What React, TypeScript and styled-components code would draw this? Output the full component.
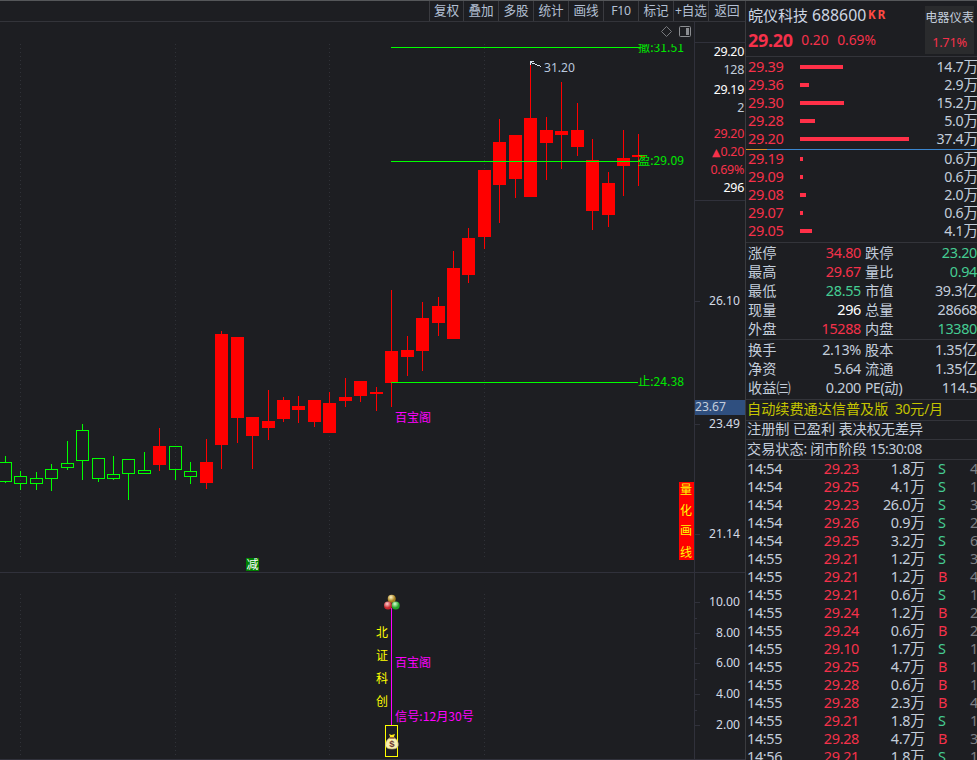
import React from "react";
import styled, { createGlobalStyle } from "styled-components";

const C = {
  bg: "#1d1e22",
  line: "#33343a",
  axis: "#30313b",
  text: "#c3cddb",
  red: "#f5314a",
  green: "#45cc92",
  white: "#ffffff",
  dim: "#7d7f84",
  up: "#ff0000",
  down: "#00ff00",
  magenta: "#ff00ff",
};

const CJK = `"Noto Sans CJK SC", "Noto Sans", sans-serif`;
const LATIN = `"Noto Sans", "Noto Sans CJK SC", sans-serif`;

const Global = createGlobalStyle`
  * { box-sizing: border-box; }
  body { margin: 0; background: ${C.bg}; overflow: hidden; font-family: ${CJK}; }
`;

/* Latin runs are set slightly smaller and tighter than the Chinese text beside them. */
const Latin = styled.span`
  font-family: ${LATIN};
  font-size: 0.975em;
  letter-spacing: -0.024em;
`;

const isLatin = (s: string) => /^[\x20-\x7e]+$/.test(s);

const T = ({ children }: { children: string }) => (
  <>
    {children
      .split(/([\x20-\x7e]+)/)
      .filter(Boolean)
      .map((p, i) => (isLatin(p) ? <Latin key={i}>{p}</Latin> : p))}
  </>
);

const Screen = styled.div`
  width: 977px;
  height: 760px;
  display: grid;
  grid-template-columns: 745px 232px;
  background: ${C.bg};
  border-top: 1px solid #55575a;
  overflow: hidden;
`;

const Left = styled.div`
  display: flex;
  flex-direction: column;
  min-width: 0;
`;

const Toolbar = styled.div`
  display: flex;
  justify-content: flex-end;
  flex: none;
  height: 21px;
  border-bottom: 1px solid ${C.line};
`;

const Tool = styled.div<{ $w?: number }>`
  width: ${(p) => p.$w ?? 35}px;
  flex: none;
  border-left: 1px solid #3a3b40;
  color: #b4c0d4;
  font-size: 12.6px;
  line-height: 18px;
  text-align: center;
  white-space: nowrap;
  overflow: hidden;
`;

const ChartArea = styled.div`
  display: grid;
  grid-template-columns: 694px 51px;
  flex: 1;
  min-height: 0;
`;

const Axis = styled.div`
  display: flex;
  flex-direction: column;
  overflow: hidden;
`;

const Quote = styled.div`
  flex: none;
  height: 178px;
  border-left: 1px solid ${C.axis};
  padding-top: 20px;
`;

const QuoteList = styled.div`
  border-top: 1px solid ${C.axis};
  height: 100%;
  padding-right: 1px;
  text-align: right;
  font-size: 12.8px;
`;

const QuoteRow = styled.div<{ $c: string; $h: number }>`
  height: ${(p) => p.$h}px;
  line-height: 16px;
  color: ${(p) => p.$c};
  white-space: nowrap;
`;

const Triangle = styled.span`
  font-family: "DejaVu Sans", sans-serif;
  font-size: 11px;
`;

const Side = styled.div`
  border-left: 1px solid #3a3b3f;
  min-width: 0;
  overflow: hidden;
  color: ${C.text};
  font-size: 15px;
  white-space: nowrap;
`;

const Header = styled.div`
  display: flex;
  justify-content: space-between;
  height: 56px;
  padding: 5px 3px 0 2px;
  border-bottom: 1px solid ${C.line};
`;

const Title = styled.div`
  display: flex;
  height: 20px;
  line-height: 18px;
  color: #cdd6e2;
  gap: 4px;
`;

const Code = styled.span`
  font-family: ${LATIN};
  font-size: 15.8px;
`;

const Tag = styled.span`
  font: bold 12.5px/13px "DejaVu Sans Mono", monospace;
  letter-spacing: 2px;
  margin-left: -2px;
  margin-top: 2px;
  color: #ff4a42;
`;

const PriceLine = styled.div`
  display: flex;
  align-items: center;
  height: 27px;
  gap: 8.5px;
  color: ${C.red};
  font-family: ${LATIN};
  font-size: 13.8px;
`;

const Price = styled.span`
  font-size: 18px;
  font-weight: 700;
  letter-spacing: -0.3px;
`;

const Sector = styled.div`
  width: 49px;
  height: 48px;
  background: #2a2b2d;
  font-size: 12.2px;
  line-height: 23px;
  text-align: center;
`;

const SectorPct = styled.div`
  color: ${C.red};
  line-height: 25px;
  font-size: 13.2px;
`;

const Book = styled.div<{ $h: number; $shift?: number }>`
  height: ${(p) => p.$h}px;
  margin-top: ${(p) => p.$shift ?? 0}px;
`;

const BookRow = styled.div`
  display: grid;
  grid-template-columns: 52px 1fr auto;
  align-items: center;
  height: 18px;
  line-height: 18px;
  padding-left: 2px;
`;

const Amount = styled.span`
  font-size: 14.6px;
  margin-right: -1px;
`;

const AskBid = styled.span`
  color: ${C.red};
  height: 18px;
  line-height: 16px;
`;

const Bar = styled.div<{ $w: number }>`
  width: ${(p) => p.$w}px;
  height: 4px;
  background: #ff3048;
`;

const Divider = styled.div`
  height: 1px;
  background: linear-gradient(to right, #d8922c 21px, #3b86cf 21px);
`;

const Section = styled.div<{ $h: number }>`
  height: ${(p) => p.$h}px;
  border-top: 1px solid ${C.line};
`;

const Stat = styled.div`
  display: grid;
  grid-template-columns: 48px 65px 4px 48px 64px;
  height: 19px;
  line-height: 18px;
  font-size: 14.8px;
  padding-left: 2px;
`;

const Val = styled.span<{ $c?: string }>`
  color: ${(p) => p.$c ?? C.text};
  text-align: right;
`;

const LastVal = styled(Val)`
  grid-column: 5;
`;

const StatName = styled.span<{ $col: number }>`
  grid-column: ${(p) => p.$col};
  font-size: 14.2px;
`;

const Notice = styled.div<{ $c?: string; $h: number; $lh: number }>`
  height: ${(p) => p.$h}px;
  border-top: 1px solid ${C.line};
  line-height: ${(p) => p.$lh}px;
  padding-left: 1px;
  font-size: 14.15px;
  white-space: pre;
  color: ${(p) => p.$c ?? C.text};
`;

const Trades = styled.div`
  border-top: 1px solid ${C.line};
`;

const Trade = styled.div`
  display: grid;
  grid-template-columns: 50px 62px 66px 13px 26px 10px;
  height: 18px;
  line-height: 16px;
  padding-left: 1px;
  font-size: 14.8px;
`;

const Direction = styled.span<{ $buy: boolean }>`
  grid-column: 5;
  color: ${(p) => (p.$buy ? C.red : C.green)};
`;

const Count = styled.span`
  color: ${C.dim};
  margin-left: 6px;
`;

const Svg = styled.svg`
  display: block;
  flex: none;
`;

const tools: [string, number?][] = [
  ["复权", 34], ["叠加"], ["多股"], ["统计"], ["画线"], ["F10"], ["标记"], ["+自选"], ["返回", 37],
];

/* left x, body top, body bottom, wick top, wick bottom, hollow */
const candles: [number, number, number, number, number, number?][] = [
  [-1, 462, 482, 456, 483, 1], [14, 476, 484, 471, 490, 1], [30, 478, 484, 472, 490, 1],
  [45, 469, 479, 464, 491, 1], [61, 463, 468, 441, 470, 1], [76, 430, 461, 424, 480, 1],
  [92, 458, 479, 458, 482, 1], [107, 474, 479, 456, 480, 1], [122, 459, 474, 459, 500, 1],
  [138, 470, 474, 452, 474, 1], [153, 446, 465, 428, 471], [169, 446, 470, 446, 480, 1],
  [184, 471, 477, 462, 484, 1], [200, 462, 483, 439, 489], [215, 334, 445, 331, 469],
  [231, 337, 418, 337, 443], [246, 417, 436, 417, 469], [262, 421, 428, 390, 440],
  [277, 400, 419, 397, 422], [292, 406, 410, 396, 423], [308, 400, 422, 400, 427],
  [323, 403, 433, 392, 433], [339, 397, 401, 378, 407], [354, 381, 396, 381, 402],
  [370, 392, 394, 387, 411], [385, 351, 383, 290, 407], [401, 350, 357, 336, 376],
  [416, 318, 351, 302, 371], [432, 306, 323, 297, 336], [447, 268, 339, 251, 339],
  [462, 238, 275, 228, 283], [478, 170, 237, 170, 249], [493, 142, 185, 119, 223],
  [509, 135, 179, 135, 198], [524, 118, 197, 64, 197], [540, 130, 143, 117, 180],
  [555, 131, 135, 82, 169], [571, 130, 147, 103, 156], [586, 160, 211, 139, 230],
  [602, 183, 215, 172, 227], [617, 158, 166, 130, 196], [632, 155, 157, 134, 186],
];

const Candle = ({ c }: { c: (typeof candles)[number] }) => {
  const [x, t, b, wt, wb, hollow] = c;
  const col = hollow ? C.down : C.up;
  return (
    <g fill={col}>
      {wt < t && <rect x={x + 6} y={wt} width={1} height={t - wt} />}
      {wb > b && <rect x={x + 6} y={b} width={1} height={wb - b} />}
      {hollow ? (
        <rect x={x + 0.5} y={t + 0.5} width={12} height={b - t - 1} fill="none" stroke={col} />
      ) : (
        <rect x={x} y={t} width={13} height={b - t} />
      )}
    </g>
  );
};

const Label = ({ x, y, w, fill, size = 12, children }: {
  x: number; y: number; w?: number; fill: string; size?: number; children: string;
}) => (
  <text x={x} y={y} fill={fill} fontSize={size} fontFamily={isLatin(children) ? LATIN : CJK}
    textLength={w} lengthAdjust="spacingAndGlyphs">{children}</text>
);

const Chart = () => (
  <Svg width={694} height={738} viewBox="0 22 694 738" shapeRendering="crispEdges">
    <defs>
      <clipPath id="plot"><rect x={0} y={44} width={694} height={528} /></clipPath>
      <radialGradient id="gold" cx="40%" cy="30%"><stop offset="0" stopColor="#fff6c8" /><stop offset="1" stopColor="#a8801c" /></radialGradient>
      <radialGradient id="ruby" cx="40%" cy="30%"><stop offset="0" stopColor="#ffd0d0" /><stop offset="1" stopColor="#c8262c" /></radialGradient>
      <radialGradient id="jade" cx="40%" cy="30%"><stop offset="0" stopColor="#d8ffd0" /><stop offset="1" stopColor="#25a32a" /></radialGradient>
    </defs>
    {[20, 175, 329, 484].map((x) => (
      <g key={x} stroke="#303238" strokeDasharray="1 3">
        <path d={`M${x + 0.5} 44V558`} /><path d={`M${x + 0.5} 594V757`} />
      </g>
    ))}
    <path d="M0 572.5H694M0 759.5H694" stroke={C.axis} />
    {candles.map((c) => <Candle key={c[0]} c={c} />)}
    <path d="M391 47.5H640M391 161.5H640M391 382.5H638" stroke={C.down} />
    <g clipPath="url(#plot)"><Label x={638} y={51.5} w={46} fill="#00e800">撤:31.51</Label></g>
    <Label x={638} y={165} w={46} fill="#00e800">盈:29.09</Label>
    <Label x={638} y={386} w={46} fill="#00e800">止:24.38</Label>
    <path d="M534 61.5H531L530.500 65.500M531 62.5L536 64.5L541.5 66.5" fill="none" stroke="#d5deea" />
    <Label x={544} y={72} w={31} fill="#b9c8de">31.20</Label>
    <path d="M666.500 26.500L671.500 31.500L666.500 36.500L661.500 31.500Z" fill="none" stroke="#77797d" shapeRendering="auto" />
    <rect x={679.5} y={26.500} width={11} height={10} rx={1} fill="none" stroke="#8b8d91" shapeRendering="auto" />
    <rect x={686} y={28} width={3} height={7} fill="#8b8d91" />
    <Label x={395} y={422} w={36} fill={C.magenta}>百宝阁</Label>
    <rect x={246} y={558} width={13} height={13} fill="#008000" />
    <Label x={246.500} y={569} w={12} fill="#fff">减</Label>
    <rect x={679} y={482} width={15} height={78} fill="#ff0000" />
    {["量", "化", "画", "线"].map((s, i) => (
      <Label key={s} x={680} y={[494, 515, 535, 557][i]} fill="#ffff00">{s}</Label>
    ))}
    <path d="M391.500 608V725" stroke={C.magenta} />
    <g shapeRendering="auto">
      <circle cx={391.7} cy={598.8} r={4} fill="url(#gold)" />
      <circle cx={388} cy={605.500} r={4} fill="url(#ruby)" />
      <circle cx={395.700} cy={605.500} r={4} fill="url(#jade)" />
    </g>
    {["北", "证", "科", "创"].map((s, i) => (
      <Label key={s} x={376} y={[637, 660, 683, 706][i]} fill="#ffff00">{s}</Label>
    ))}
    <Label x={395} y={667} w={36} fill={C.magenta}>百宝阁</Label>
    <Label x={395} y={721} w={79} fill={C.magenta}>信号:12月30号</Label>
    <rect x={385.500} y={725.500} width={12} height={31} fill="none" stroke="#ffff00" />
    <g shapeRendering="auto">
      <path d="M389 734L391.500 735L395 734L393.700 737.500H390.300Z" fill="#ffe81a" />
      <path d="M390 737.500H394C396.500 739 398.700 742 398.200 745.500C397.800 748 395.500 749 392 749C388.500 749 386 748 385.600 745.500C385.200 742 387.500 739 390 737.500Z" fill="#f8f0b0" stroke="#c9b868" strokeWidth={0.6} />
      <path d="M389.500 738H394.500" stroke="#7a3020" strokeWidth={1.2} />
      <text x={389.200} y={747} fontSize={9.500} fontWeight={700} fontFamily="Liberation Sans, sans-serif" fill="#6e3a30">$</text>
    </g>
  </Svg>
);

const quotes: [string, string, number, boolean?][] = [
  ["29.20", "#fff", 18], ["128", C.text, 20], ["29.19", "#fff", 18], ["2", C.text, 26],
  ["29.20", C.red, 18], ["0.20", C.red, 18, true], ["0.69%", C.red, 18], ["296", "#fff", 18],
];

const axisLabels: [string, number][] = [
  ["26.10", 301], ["23.49", 424], ["21.14", 534],
  ["10.00", 602], ["8.00", 633], ["6.00", 663], ["4.00", 694], ["2.00", 725],
];

const AxisScale = () => (
  <Svg width={51} height={560} viewBox="694 200 51 560" shapeRendering="crispEdges">
    <path d="M694.500 200V760M694 200.500H745M694 572.500H745M694 759.500H745" stroke={C.axis} />
    {axisLabels.map(([s, y]) => (
      <g key={s}>
        <path d={`M695 ${y + 0.5}h5`} stroke={C.axis} />
        <text x={740} y={y + 4} textAnchor="end" fontFamily={LATIN} fontSize={12.4} fill="#d3dbe6"
          textLength={s.length === 5 ? 31 : 24} lengthAdjust="spacingAndGlyphs">{s}</text>
      </g>
    ))}
    {[618, 648, 679, 710].map((y) => <path key={y} d={`M695 ${y + 0.5}h2`} stroke={C.axis} />)}
    <rect x={695} y={400} width={50} height={15} fill="#2f4f7f" />
    <text x={695} y={411} fontFamily={LATIN} fontSize={12.400} fill="#c3cddb" textLength={31} lengthAdjust="spacingAndGlyphs">23.67</text>
  </Svg>
);

const asks: [string, number, string][] = [
  ["29.39", 43, "14.7万"], ["29.36", 9, "2.9万"], ["29.30", 44, "15.2万"], ["29.28", 15, "5.0万"], ["29.20", 109, "37.4万"],
];
const bids: [string, number, string][] = [
  ["29.19", 3, "0.6万"], ["29.09", 3, "0.6万"], ["29.08", 6, "2.0万"], ["29.07", 3, "0.6万"], ["29.05", 12, "4.1万"],
];

type StatRow = [string, string, string | undefined, string, string, string?];
const statsA: StatRow[] = [
  ["涨停", "34.80", C.red, "跌停", "23.20", C.green],
  ["最高", "29.67", C.red, "量比", "0.94", C.green],
  ["最低", "28.55", C.green, "市值", "39.3亿"],
  ["现量", "296", C.white, "总量", "28668"],
  ["外盘", "15288", C.red, "内盘", "13380", C.green],
];
const statsB: StatRow[] = [
  ["换手", "2.13%", undefined, "股本", "1.35亿"],
  ["净资", "5.64", undefined, "流通", "1.35亿"],
  ["收益㈢", "0.200", undefined, "PE(动)", "114.5"],
];

const trades = `14:54 29.23 1.8万 S 4
14:54 29.25 4.1万 S 1
14:54 29.23 26.0万 S 3
14:54 29.26 0.9万 S 2
14:54 29.25 3.2万 S 6
14:55 29.21 1.2万 S 3
14:55 29.21 1.2万 B 4
14:55 29.21 0.6万 S 1
14:55 29.24 1.2万 B 2
14:55 29.24 0.6万 B 2
14:55 29.10 1.7万 S 1
14:55 29.25 4.7万 B 1
14:55 29.28 0.6万 B 1
14:55 29.28 2.3万 B 4
14:55 29.21 1.8万 S 1
14:55 29.28 4.7万 B 3
14:56 29.21 1.8万 S 1`.split("\n").map((l) => l.split(" "));

const BookRows = ({ rows }: { rows: typeof asks }) => (
  <>
    {rows.map(([p, w, v]) => (
      <BookRow key={p}><AskBid><T>{p}</T></AskBid><Bar $w={w} /><Amount><T>{v}</T></Amount></BookRow>
    ))}
  </>
);

const StatRows = ({ rows }: { rows: StatRow[] }) => (
  <>
    {rows.map(([a, av, ac, b, bv, bc]) => (
      <Stat key={a}>
        <StatName $col={1}>{a}</StatName><Val $c={ac}><T>{av}</T></Val>
        <StatName $col={4}><T>{b}</T></StatName><LastVal $c={bc}><T>{bv}</T></LastVal>
      </Stat>
    ))}
  </>
);

export default function App() {
  return (
    <>
      <Global />
      <Screen>
        <Left>
          <Toolbar>{tools.map(([s, w]) => <Tool key={s} $w={w}><T>{s}</T></Tool>)}</Toolbar>
          <ChartArea>
            <Chart />
            <Axis>
              <Quote>
                <QuoteList>
                  {quotes.map(([s, c, h, rise], i) => (
                    <QuoteRow key={i} $c={c} $h={h}>{rise && <Triangle>▲</Triangle>}<T>{s}</T></QuoteRow>
                  ))}
                </QuoteList>
              </Quote>
              <AxisScale />
            </Axis>
          </ChartArea>
        </Left>
        <Side>
          <Header>
            <div>
              <Title><span>皖仪科技</span><Code>688600</Code><Tag>KR</Tag></Title>
              <PriceLine><Price>29.20</Price><span>0.20</span><span>0.69%</span></PriceLine>
            </div>
            <Sector>电器仪表<SectorPct><T>1.71%</T></SectorPct></Sector>
          </Header>
          <Book $h={92}><BookRows rows={asks} /></Book>
          <Divider />
          <Book $h={93} $shift={-1}><BookRows rows={bids} /></Book>
          <Section $h={97}><StatRows rows={statsA} /></Section>
          <Section $h={60}><StatRows rows={statsB} /></Section>
          <Notice $h={21} $lh={17} $c="#c4c400"><T>自动续费通达信普及版  30元/月</T></Notice>
          <Notice $h={19} $lh={15}><T>注册制 已盈利 表决权无差异</T></Notice>
          <Notice $h={20} $lh={17}><T>交易状态: 闭市阶段 15:30:08</T></Notice>
          <Trades>
            {trades.map(([t, p, v, s, n], i) => (
              <Trade key={i}>
                <span><T>{t}</T></span><Val $c={C.red}><T>{p}</T></Val><Val><T>{v}</T></Val>
                <Direction $buy={s === "B"}><T>{s}</T></Direction><Count><T>{n}</T></Count>
              </Trade>
            ))}
          </Trades>
        </Side>
      </Screen>
    </>
  );
}
